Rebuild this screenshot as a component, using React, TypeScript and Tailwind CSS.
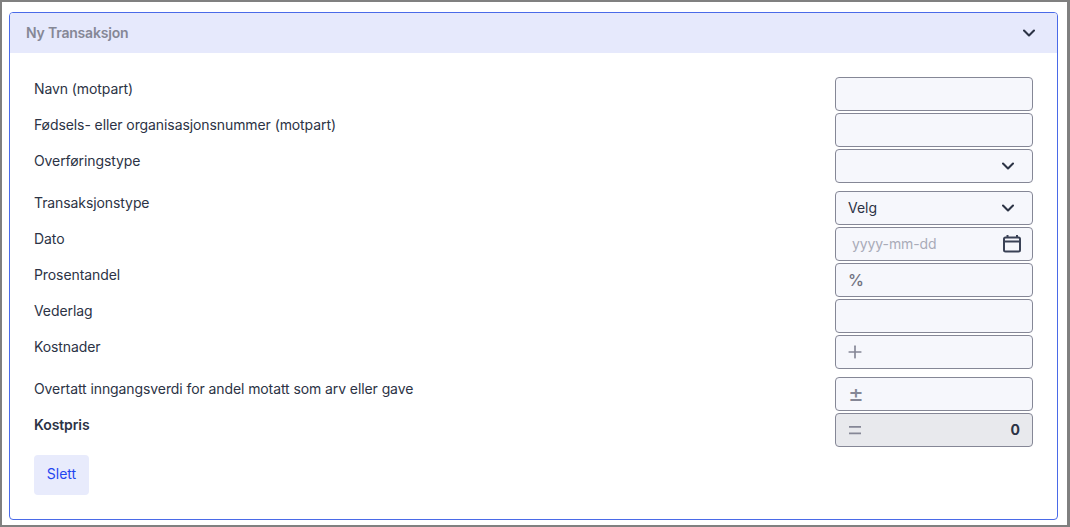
import { ChevronDown, Plus } from 'lucide-react';
import type { ReactNode } from 'react';

/* ──── One form row: label on the left, fixed-width field on the right ──── */
function Row({ label, bold, className, children }: { label: string; bold?: boolean; className?: string; children: ReactNode }) {
  return (
    <div className={`flex items-start justify-between ${className ?? ''}`}>
      <span className={`text-[14px] leading-6 tracking-[-0.09px] text-[#2c3345] ${bold ? 'font-semibold' : ''}`}>{label}</span>
      {children}
    </div>
  );
}

function Field({ muted, children }: { muted?: boolean; children?: ReactNode }) {
  return (
    <div
      className={`flex h-[34px] w-[198px] items-center rounded-[4px] border border-[#858796] px-3 text-[14px] text-[#2c3345] ${
        muted ? 'bg-[#e8e9ed]' : 'bg-[#f6f7fc]'
      }`}
    >
      {children}
    </div>
  );
}

function SelectChevron() {
  return <ChevronDown className="ml-auto mr-[2px] h-5 w-5 text-[#2c3345]" strokeWidth={2.5} />;
}

export default function App() {
  return (
    <div className="h-[527px] w-[1070px] border-2 border-r-[3px] border-[#808080] bg-white pb-[5px] pl-[7px] pr-[9px] pt-[10px] font-['Inter',sans-serif]">
      <div className="h-[508px] overflow-hidden rounded-[4px] border border-[#4a6ae8]">
        {/* header */}
        <div className="flex h-[40px] items-center justify-between bg-[#e6e9fc] pl-4 pr-[18px]">
          <span className="pb-[2px] text-[14px] font-semibold tracking-[-0.2px] text-[#858796]">Ny Transaksjon</span>
          <ChevronDown className="h-5 w-5 text-[#2c3345]" strokeWidth={2.5} />
        </div>

        <div className="flex flex-col gap-[2px] p-6">
          <Row label="Navn (motpart)"><Field /></Row>
          <Row label="Fødsels- eller organisasjonsnummer (motpart)"><Field /></Row>
          <Row label="Overføringstype">
            <Field><SelectChevron /></Field>
          </Row>
          <Row label="Transaksjonstype" className="mt-[6px]">
            <Field>
              <span className="pb-[2px]">Velg</span>
              <SelectChevron />
            </Field>
          </Row>
          <Row label="Dato">
            <Field>
              <span className="pb-[2px] pl-1 tracking-[-0.09px] text-[#a9abb8]">yyyy-mm-dd</span>
              <svg viewBox="0 0 20 20" fill="none" stroke="#3a4256" strokeWidth="2" className="-mr-[2px] ml-auto h-5 w-5">
                <rect x="2" y="3.5" width="16" height="14" rx="1.5" />
                <path d="M2 7.5h16M5.5 1v2.5M15 1v2.5" />
              </svg>
            </Field>
          </Row>
          <Row label="Prosentandel">
            <Field><span className="text-[16px] font-medium text-[#6f7180]">%</span></Field>
          </Row>
          <Row label="Vederlag"><Field /></Row>
          <Row label="Kostnader">
            <Field><Plus className="-ml-[3px] h-5 w-5 text-[#858796]" strokeWidth={2} /></Field>
          </Row>
          <Row label="Overtatt inngangsverdi for andel motatt som arv eller gave" className="mt-[6px]">
            <Field><span className="text-[24px] leading-none text-[#858796]">±</span></Field>
          </Row>
          <Row label="Kostpris" bold>
            <Field muted>
              <svg viewBox="0 0 20 20" fill="none" stroke="#858796" strokeWidth="1.75" className="h-5 w-5">
                <path d="M1 6.75h12M1 13.25h12" />
              </svg>
              <span className="ml-auto pb-[2px] font-bold">0</span>
            </Field>
          </Row>
          <button className="mt-[6px] h-10 w-[55px] rounded-[4px] bg-[#e8ebfc] pb-[3px] text-[14px] text-[#1f45f0]">Slett</button>
        </div>
      </div>
    </div>
  );
}
